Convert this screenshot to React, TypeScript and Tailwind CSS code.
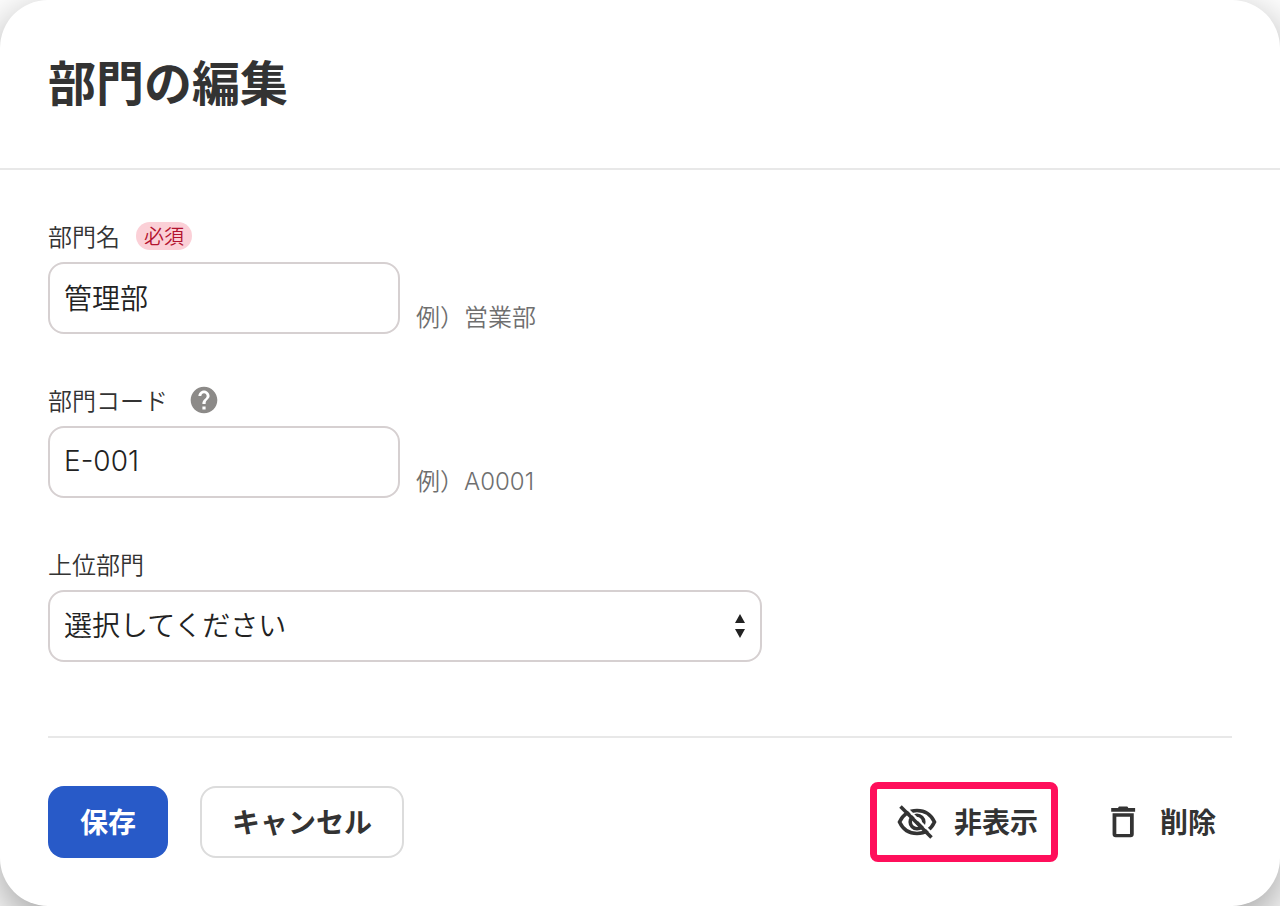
import { useState } from 'react';
import type { ReactNode } from 'react';

const HelpIcon = () => (
  <svg width="32" height="32" viewBox="0 0 24 24" fill="currentColor" aria-hidden="true">
    <path d="M12 2C6.48 2 2 6.48 2 12s4.48 10 10 10 10-4.48 10-10S17.52 2 12 2zm1.200 17.200h-2.400v-2.400h2.400v2.400zm1.870-7.950-.9.92C13.45 12.900 13.200 13.500 13.200 15h-2.400v-.5c0-1.100.65-2.100 1.370-2.830l1.240-1.260c.37-.36.59-.86.59-1.410 0-1.100-.9-2-2-2s-2 .9-2 2H7.800c0-2.210 1.990-4.200 4.200-4.200s4.200 1.990 4.200 4.200c0 .88-.56 1.680-1.130 2.250z" />
  </svg>
);

const HiddenIcon = () => (
  <svg width="41" height="41" viewBox="0 0 41 41" fill="none" stroke="currentColor" aria-hidden="true">
    <path d="M2.500 20C6 12.500 12 8.500 20 8.500S34 12.500 37.500 20C34 27.500 28 31.500 20 31.500S6 27.500 2.500 20z" strokeWidth="3.600" />
    <circle cx="20" cy="20" r="6.800" strokeWidth="3.600" />
    <path d="M20 20l4 4" strokeWidth="4" />
    <path d="M6.500 3 37 33.500" stroke="#fff" strokeWidth="2.400" />
    <path d="M3.500 4.500 34.500 35.500" strokeWidth="3.600" />
  </svg>
);

const TrashIcon = () => (
  <svg width="41" height="41" viewBox="0 0 24 24" fill="currentColor" aria-hidden="true">
    <path d="M5.600 18.900c0 1.100.7 1.800 1.800 1.800h8.800c1.100 0 1.800-.7 1.800-1.800V6.600H5.600v12.300zM7.800 8.700h8v10h-8v-10zm7-5.200C14.500 2.900 14.300 2.700 13.800 2.700h-4c-.5 0-.7.200-1 .8h-4v2.200h14V3.500z" />
  </svg>
);

const Arrows = () => (
  <svg width="12" height="24" viewBox="0 0 12 24" fill="#222" aria-hidden="true" className="pointer-events-none absolute right-4 top-6">
    <path d="M6 0 11 9H1zM6 24 1 15h10z" />
  </svg>
);

type FieldProps = {
  id: string;
  label: string;
  badge?: ReactNode;
  hint: string;
  initial: string;
};

function Field({ id, label, badge, hint, initial }: FieldProps) {
  const [value, setValue] = useState(initial);

  return (
    <div>
      <div className="flex h-9 items-center gap-4">
        <label htmlFor={id} className="text-2xl">{label}</label>
        {badge}
      </div>
      <div className="mt-2 flex items-end gap-4">
        <input
          id={id}
          type="text"
          value={value}
          onChange={(e) => setValue(e.target.value)}
          aria-describedby={`${id}-hint`}
          className="h-18 w-88 rounded-2xl border-2 border-[#d6d0d1] bg-white px-3.5 pb-0.5 font-['Inter','Noto_Sans_CJK_JP',sans-serif] text-[28px] text-[#222]"
        />
        <span id={`${id}-hint`} className="font-['Inter','Noto_Sans_CJK_JP',sans-serif] text-2xl text-[#6f6f6f]">{hint}</span>
      </div>
    </div>
  );
}

export default function App() {
  return (
    <div className="min-h-screen overflow-hidden bg-white font-['Noto_Sans_CJK_JP',sans-serif] font-[350] text-[#333]">
      <main className="min-h-screen rounded-[48px] bg-white shadow-[0_16px_48px_rgba(0,0,0,0.4)]">
        <header className="border-b-2 border-[#e8e8e8] px-12 pt-11 pb-13">
          <h1 className="text-5xl leading-[72px] font-bold">部門の編集</h1>
        </header>

        <form className="px-12 pt-12" onSubmit={(e) => e.preventDefault()}>
          <div className="space-y-12">
            <Field
              id="name"
              label="部門名"
              hint="例）営業部"
              initial="管理部"
              badge={<span className="rounded-full bg-[#fbd0d7] px-2 text-xl leading-7 text-[#b3132f]">必須</span>}
            />
            <Field
              id="code"
              label="部門コード"
              hint="例）A0001"
              initial="E-001"
              badge={
                <button type="button" aria-label="ヘルプ" className="px-1 text-[#8c8a88]">
                  <HelpIcon />
                </button>
              }
            />
            <div>
              <div className="flex h-9 items-center">
                <label htmlFor="parent" className="text-2xl">上位部門</label>
              </div>
              <div className="relative mt-2 max-w-[714px]">
                <select id="parent" className="h-18 w-full appearance-none rounded-2xl border-2 border-[#d6d0d1] bg-white px-3.5 pb-1 text-[28px] text-[#222]">
                  <option>選択してください</option>
                </select>
                <Arrows />
              </div>
            </div>
          </div>

          <div className="mt-[74px] flex items-center justify-between border-t-2 border-[#e8e8e8] pt-11 text-[28px] font-bold">
            <div className="flex gap-8">
              <button type="submit" className="h-18 rounded-2xl bg-[#285ac8] px-8 pb-0.5 text-white">保存</button>
              <button type="button" className="h-18 rounded-2xl border-2 border-[#dcdcdc] px-[30px] pb-0.5">キャンセル</button>
            </div>
            <div className="flex items-center gap-[29px]">
              <button type="button" className="flex h-20 items-center gap-4 rounded-lg border-[7px] border-[#ff0f5b] pr-[13px] pl-5">
                <HiddenIcon />
                <span className="pb-0.5">非表示</span>
              </button>
              <button type="button" className="flex h-18 items-center gap-4 px-4">
                <TrashIcon />
                <span className="pb-0.5">削除</span>
              </button>
            </div>
          </div>
        </form>
      </main>
    </div>
  );
}
